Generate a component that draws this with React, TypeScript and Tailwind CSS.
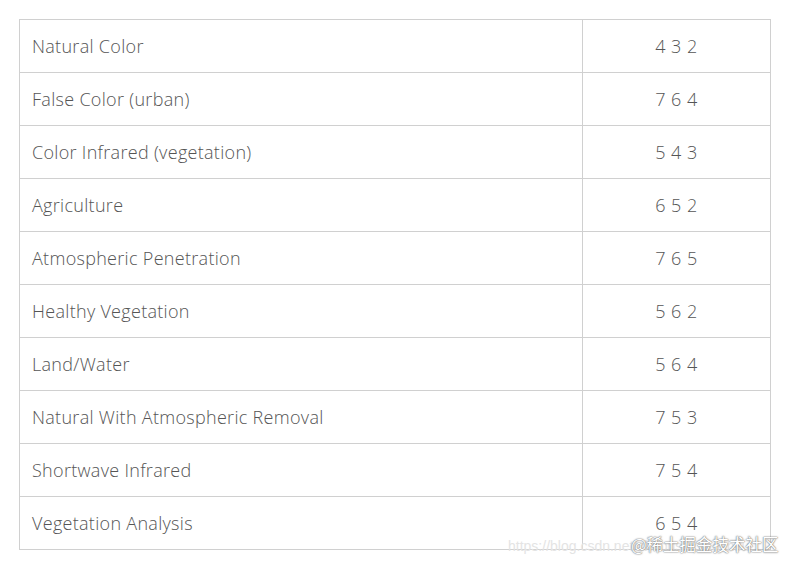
import React from "react";

const rows = [
  ["Natural Color", "4 3 2"],
  ["False Color (urban)", "7 6 4"],
  ["Color Infrared (vegetation)", "5 4 3"],
  ["Agriculture", "6 5 2"],
  ["Atmospheric Penetration", "7 6 5"],
  ["Healthy Vegetation", "5 6 2"],
  ["Land/Water", "5 6 4"],
  ["Natural With Atmospheric Removal", "7 5 3"],
  ["Shortwave Infrared", "7 5 4"],
  ["Vegetation Analysis", "6 5 4"],
];

export default function App() {
  return (
    <div className="relative w-[797px] h-[572px] bg-white overflow-hidden">
      <div className="pt-[19px] pl-[19px]">
        <table className="border-collapse w-[752px] table-fixed">
          <colgroup>
            <col className="w-[563px]" />
            <col />
          </colgroup>
          <tbody>
            {rows.map(([name, bands]) => (
              <tr key={name} className="h-[53px]">
                <td className="border border-[#d0d0d0] pl-[12px] text-[18px] tracking-[0.3px] font-light text-[#555] font-['Open_Sans',sans-serif]">
                  {name}
                </td>
                <td className="border border-[#d0d0d0] text-center text-[18px] tracking-[0.5px] font-light text-[#555] font-['Open_Sans',sans-serif]">
                  {bands}
                </td>
              </tr>
            ))}
          </tbody>
        </table>
      </div>

      {/* watermark */}
      <div className="absolute left-[508px] top-[536px] text-[14px] text-[#e4e4e4] font-['Liberation_Sans',sans-serif] whitespace-nowrap">
        https://blog.csdn.net/zhebushibiaoshifu
      </div>
      <div className="absolute left-[631px] top-[532px] text-[16.5px] text-white font-['Noto_Sans_CJK_SC',sans-serif] whitespace-nowrap [text-shadow:0_0_2px_#777,0_0_1px_#555]">
        @稀土掘金技术社区
      </div>
    </div>
  );
}
